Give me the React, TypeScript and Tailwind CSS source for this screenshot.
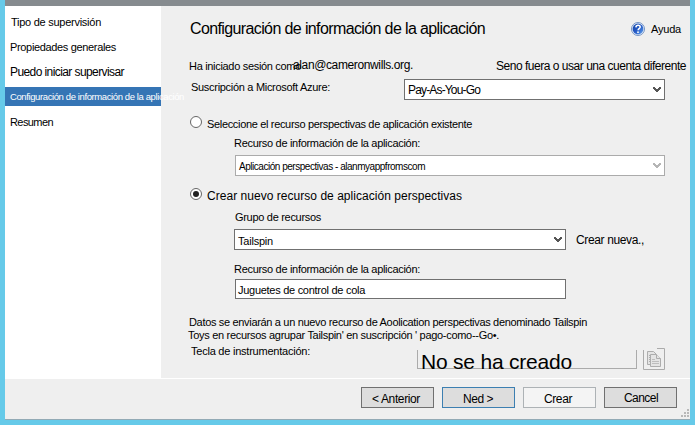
import { useLayoutEffect, useRef, useState } from 'react';
import clsx from 'clsx';

type FitProps = { children: string; width: number; className?: string };

// A single line of text whose tracking is adjusted to fill the given width.
function Fit({ children, width, className }: FitProps) {
  const ref = useRef<HTMLSpanElement>(null);
  const [spacing, setSpacing] = useState(0);
  useLayoutEffect(() => {
    const node = ref.current;
    if (!node) return;
    node.style.letterSpacing = '0px';
    const natural = node.getBoundingClientRect().width;
    const value = (width - natural) / children.length;
    node.style.letterSpacing = `${value}px`;
    setSpacing(value);
  }, [children, width]);
  return (
    <span
      ref={ref}
      style={{ letterSpacing: spacing }}
      className={clsx('block w-fit shrink-0 whitespace-pre', className ?? 'text-[11px] leading-4')}
    >
      {children}
    </span>
  );
}

function Chevron({ className }: { className: string }) {
  return (
    <svg width="8" height="6" viewBox="0 0 8 6" className={clsx('shrink-0', className)} shapeRendering="crispEdges">
      <path d="M0 0h2v1h1v1h2v-1h1v-1h2v2h-1v1h-1v1h-1v1h-2v-1h-1v-1h-1v-1h-1z" fill="currentColor" />
    </svg>
  );
}

function Radio({ checked }: { checked?: boolean }) {
  return (
    <span className="flex h-3 w-3 shrink-0 items-center justify-center rounded-full border border-[#666] bg-white">
      {checked && <span className="h-1.5 w-1.5 rounded-full bg-[#222]" />}
    </span>
  );
}

function HelpIcon() {
  return (
    <svg width="14" height="14" viewBox="0 0 14 14" className="mt-[3px] shrink-0">
      <defs>
        <linearGradient id="help" x1="0" y1="0" x2="1" y2="1">
          <stop offset="0" stopColor="#1746a5" />
          <stop offset="0.5" stopColor="#2459c5" />
          <stop offset="1" stopColor="#69a7ef" />
        </linearGradient>
      </defs>
      <circle cx="7" cy="7" r="6.5" fill="#e8f0fb" stroke="#6488bd" strokeWidth="0.9" />
      <circle cx="7" cy="7" r="5.4" fill="url(#help)" />
      <path d="M4.9 5.4C5 3.8 6 3.3 7.1 3.3c1.2 0 2.1.7 2.1 1.8 0 1.4-2.1 1.6-2.1 3.1" fill="none" stroke="white" strokeWidth="1.5" />
      <circle cx="7" cy="10.2" r="0.9" fill="white" />
    </svg>
  );
}

// Copy button: its frame is open at the left part of the top edge.
function CopyButton() {
  return (
    <svg width="22" height="22" viewBox="0 0 22 22" className="ml-1.5 mt-[5px] shrink-0" fill="none" stroke="#ababab">
      <path d="M14 .5h7.500v21H.5V2" />
      <g fill="#e4e4e4" stroke="#adadad">
        <path d="M4.500 3.500h6l3 3v10h-9z" />
        <path d="M6 7.500h2M6 9.500h2M6 11.500h2M6 13.500h2" />
        <path d="M7.500 6.500h6l4 4v8h-10z" />
        <path d="M13.500 6.500v4h4" />
        <path d="M9 11.500h3M9 13.500h7M9 15.500h7" stroke="#bdbdbd" />
      </g>
    </svg>
  );
}

function Grip() {
  return (
    <svg width="8" height="8" viewBox="0 0 8 8" fill="#b8b8b8" shapeRendering="crispEdges">
      <path d="M6 0h2v2h-2zM3 3h2v2h-2zM6 3h2v2h-2zM0 6h2v2h-2zM3 6h2v2h-2zM6 6h2v2h-2z" />
    </svg>
  );
}

function Sidebar() {
  return (
    <nav className="flex w-[156px] shrink-0 flex-col bg-white pt-2">
      <div className="h-[25px] pl-1.5"><Fit width={90}>Tipo de supervisión</Fit></div>
      <div className="h-[25px] pl-[5px]"><Fit width={106}>Propiedades generales</Fit></div>
      <div className="h-[23px] pl-[5px]"><Fit width={114} className="text-xs leading-4">Puedo iniciar supervisar</Fit></div>
      <div className="relative z-10 h-[19px] bg-[#3575b5] pl-[5px] pt-0.5 text-white">
        <Fit width={174} className="text-[9.5px] leading-4">Configuración de información de la aplicación</Fit>
      </div>
      <div className="pl-[5px] pt-2"><Fit width={43}>Resumen</Fit></div>
    </nav>
  );
}

function Content() {
  return (
    <main className="flex w-[529px] shrink-0 flex-col">
      <header className="flex h-[45px] items-start pl-[29px] pt-[13px]">
        <Fit width={295} className="text-base leading-5">Configuración de información de la aplicación</Fit>
        <span className="ml-[146px] flex gap-1.5">
          <HelpIcon />
          <Fit width={30} className="mt-0.5 text-[11px] leading-4">Ayuda</Fit>
        </span>
      </header>
      <div className="flex h-[22px] items-start pl-7 pt-[6px]">
        <Fit width={112} className="mt-px text-[11px] leading-4">Ha iniciado sesión como</Fit>
        <Fit width={120} className="-ml-2 text-xs leading-4">alan@cameronwills.org.</Fit>
        <Fit width={190} className="ml-[83px] mt-px text-xs leading-4">Seno fuera o usar una cuenta diferente</Fit>
      </div>
      <div className="flex h-[37px] items-start pl-[30px] pt-1.5">
        <Fit width={139}>Suscripción a Microsoft Azure:</Fit>
        <div className="ml-[74px] flex h-[21px] w-[261px] items-center justify-between border border-[#707070] bg-white pl-[3px] pr-[3px]">
          <Fit width={72} className="text-xs leading-4">Pay-As-You-Go</Fit>
          <Chevron className="text-[#555]" />
        </div>
      </div>
      <div className="flex h-[25px] items-start gap-[5px] pl-[29px] pt-1.5">
        <Radio />
        <Fit width={265}>Seleccione el recurso perspectivas de aplicación existente</Fit>
      </div>
      <div className="h-5 pl-[73px]"><Fit width={186}>Recurso de información de la aplicación:</Fit></div>
      <div className="ml-[74px] flex h-[21px] w-[430px] items-center justify-between border border-[#ababab] bg-white px-[3px]">
        <Fit width={186} className="mt-[3px] text-[10px] leading-4">Aplicación perspectivas - alanmyappfromscom</Fit>
        <Chevron className="text-[#b5b5b5]" />
      </div>
      <div className="flex h-[33px] items-start gap-[5px] pl-[29px] pt-3">
        <Radio checked />
        <Fit width={255} className="text-xs leading-4">Crear nuevo recurso de aplicación perspectivas</Fit>
      </div>
      <div className="h-5 pl-[74px]"><Fit width={86}>Grupo de recursos</Fit></div>
      <div className="flex h-8 items-start pl-[73px]">
        <div className="flex h-[21px] w-[332px] items-center justify-between border border-[#707070] bg-white px-[3px]">
          <Fit width={35} className="mt-[3px] text-[11px] leading-4">Tailspin</Fit>
          <Chevron className="text-[#555]" />
        </div>
        <Fit width={68} className="ml-2.5 mt-[3px] text-xs leading-4">Crear nueva.,</Fit>
      </div>
      <div className="h-[18px] pl-[73px]"><Fit width={186}>Recurso de información de la aplicación:</Fit></div>
      <div className="ml-[74px] flex h-5 w-[331px] items-start border border-[#707070] bg-white pl-0.5 pt-0.5">
        <Fit width={127}>Juguetes de control de cola</Fit>
      </div>
      <div className="flex flex-col pl-[27px] pt-[15px]">
        <div className="h-[13px] pl-px"><Fit width={398}>Datos se enviarán a un nuevo recurso de Aoolication perspectivas denominado Tailspin</Fit></div>
        <div className="h-4"><Fit width={311}>{"Toys en recursos agrupar Tailspin' en suscripción ' pago-como--Go•."}</Fit></div>
      </div>
      <div className="flex h-[35px] items-start pl-[30px]">
        <Fit width={119}>Tecla de instrumentación:</Fit>
        <div className="ml-[107px] mt-[7px] flex h-[19px] w-[220px] items-start border border-t-0 border-[#ababab] pl-[3px]">
          <Fit width={151} className="text-[21px] leading-6">No se ha creado</Fit>
        </div>
        <CopyButton />
      </div>
      <div className="h-px bg-white" />
    </main>
  );
}

const button = 'flex h-[21px] w-[73px] items-start border pt-[3px]';

function Footer() {
  return (
    <footer className="flex h-[41px] shrink-0 items-start border-b border-[#93aab5] pl-[356px] pt-2">
      <div className="flex gap-2">
        <div className={clsx(button, 'border-[#707070] bg-[#ddd] pl-[10px]')}><Fit width={48} className="text-xs leading-4">{'< Anterior'}</Fit></div>
        <div className={clsx(button, 'border-[#3c7fb1] bg-[#ddd] pl-5')}><Fit width={30} className="text-xs leading-4">{'Ned >'}</Fit></div>
        <div className={clsx(button, 'border-[#adb2b5] bg-[#f4f4f4] pl-5')}><Fit width={28} className="text-xs leading-4">Crear</Fit></div>
        <div className={clsx(button, 'border-[#707070] bg-[#ddd] pl-[19px]')}><Fit width={34} className="-mt-px text-xs leading-4">Cancel</Fit></div>
      </div>
      <div className="ml-1 mt-[22px]"><Grip /></div>
    </footer>
  );
}

export default function App() {
  return (
    <div className="h-[425px] w-[695px] overflow-hidden bg-[#66cae9] pl-[5px] font-['Liberation_Sans',Arial,sans-serif] text-black">
      <div className="flex h-[420px] w-[685px] flex-col bg-[#efefef]">
        <div className="h-1.5 shrink-0 bg-[#868b8f]" />
        <div className="flex h-[373px] shrink-0">
          <Sidebar />
          <Content />
        </div>
        <Footer />
      </div>
    </div>
  );
}
